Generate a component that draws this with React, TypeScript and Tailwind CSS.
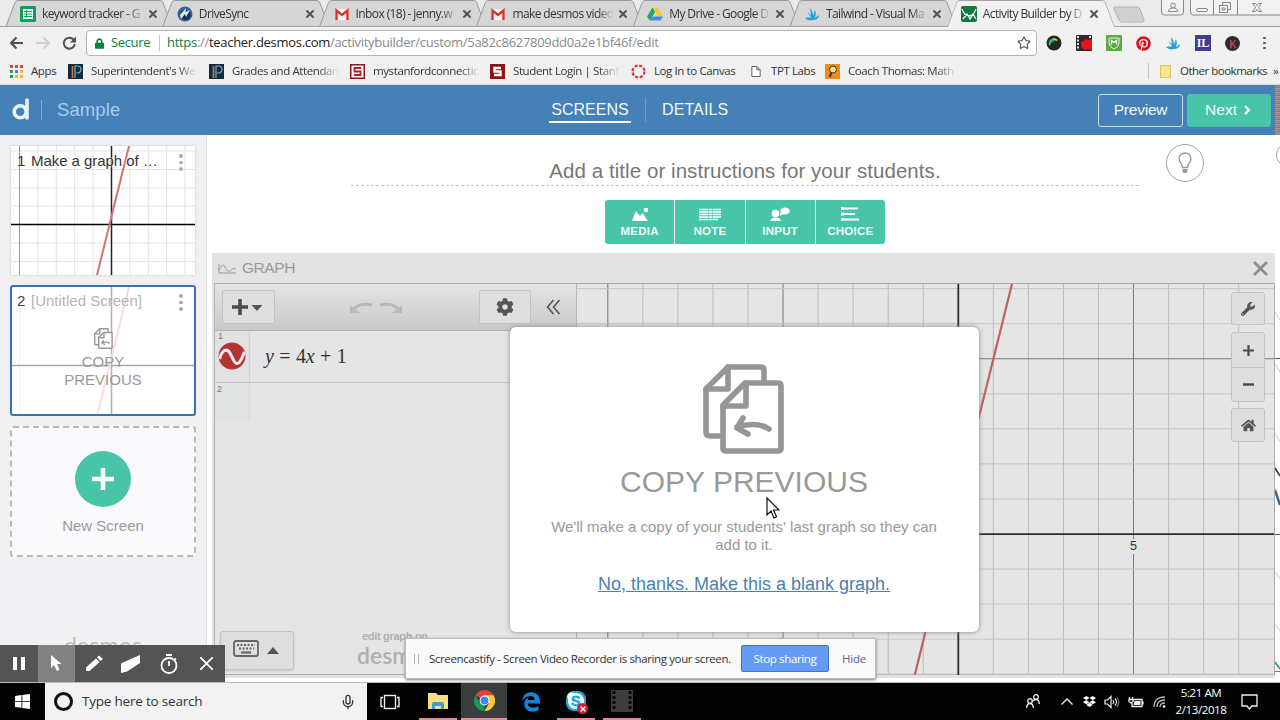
import type { ReactNode } from 'react';
import { Mic, Star, X } from 'lucide-react';
import { FaCog, FaDropbox, FaHome, FaLock, FaPinterest, FaSkype, FaWrench } from 'react-icons/fa';
import { FaEdgeLegacy } from 'react-icons/fa6';

const UI_FONT = 'font-["Open_Sans","Noto_Sans",sans-serif]';

function SheetsIcon() {
  return (
    <svg viewBox="0 0 16 16" className="w-4 h-4">
      <rect width="16" height="16" rx="1.5" fill="#0f9d58" />
      <path d="M3 3h10v10H3z" fill="#fff" />
      <path d="M4 5.5h8M4 8h8M4 10.5h8M6.5 4v8" stroke="#0f9d58" strokeWidth="1" />
    </svg>
  );
}

function DriveSyncIcon() {
  return (
    <svg viewBox="0 0 16 16" className="w-4 h-4">
      <circle cx="8" cy="8" r="7.5" fill="#2f6299" />
      <circle cx="8.5" cy="9" r="5" fill="#17324f" />
      <path d="M3 9 9 2l-.5 4L13 4l-4 7-1-3-4 5z" fill="#dbe8f5" />
    </svg>
  );
}

function GmailIcon() {
  return (
    <svg viewBox="0 0 16 16" className="w-4 h-4">
      <rect x="1" y="3" width="14" height="11" rx="1" fill="#f4f4f4" />
      <path d="M2.5 14V4.5L8 9l5.5-4.5V14" fill="none" stroke="#d5392d" strokeWidth="2.4" />
    </svg>
  );
}

function DriveIcon() {
  return (
    <svg viewBox="0 0 16 16" className="w-4 h-4">
      <path d="M5.5 1.5h5L16 10.5h-5z" fill="#fbc926" />
      <path d="M5.5 1.5 8 6 2.8 14.5 0 10.5z" fill="#22a463" />
      <path d="M5.4 10.5H16l-2.6 4H2.8z" fill="#4587f4" />
    </svg>
  );
}

function TailwindAppIcon() {
  return (
    <svg viewBox="0 0 16 16" className="w-4 h-4">
      <path d="M1 12c3-1 5 0 6-1L3 6l4 3-1-7c2 2 3 5 3 8l2-6c1 2 1 5 0 8l4-3c0 3-3 5-6 5-3 1-6 0-8-2z" fill="#25a3d8" />
    </svg>
  );
}

function DesmosIcon() {
  return (
    <svg viewBox="0 0 16 16" className="w-4 h-4">
      <rect width="16" height="16" rx="2" fill="#12783f" />
      <path d="M1 3c3 9 11 9 14 0M2 13l4-5 3 5 3-5 3 5" fill="none" stroke="#e2f5ea" strokeWidth="1.3" />
    </svg>
  );
}

const TABS: { title: string; icon: ReactNode; active?: boolean }[] = [
  { title: 'keyword tracker - G', icon: <SheetsIcon /> },
  { title: 'DriveSync', icon: <DriveSyncIcon /> },
  { title: 'Inbox (18) - jenny.w', icon: <GmailIcon /> },
  { title: 'make desmos video', icon: <GmailIcon /> },
  { title: 'My Drive - Google D', icon: <DriveIcon /> },
  { title: 'Tailwind - Visual Ma', icon: <TailwindAppIcon /> },
  { title: 'Activity Builder by D', icon: <DesmosIcon />, active: true },
];

function TabStrip() {
  return (
    <div className="relative h-[27px] bg-[#e9eaea]">
      <svg className="absolute inset-0" width="1280" height="27">
        {TABS.map((t, i) => {
          const x = 6 + i * 156.8;
          return (
            !t.active && (
              <path key={t.title} d={`M${x} 26.5 l9 -24 q1 -2 3 -2 h142 q2 0 3 2 l9 24`} fill="#d6d6d6" stroke="#9b9b9b" />
            )
          );
        })}
        <path d="M0 26.5H948l9-24q1-2 3-2h142q2 0 3 2l9 24h166" fill="none" stroke="#a3a3a3" />
        <path d="M948 27l9-24q1-2 3-2h142q2 0 3 2l9 24z" fill="#f1f1f1" />
        <path d="M1115 7h22q2 0 3 2l4 11q1 2-2 2h-20q-2 0-3-2l-5-11q-1-2 1-2z" fill="#d0d0d0" stroke="#b3b3b3" />
        {/* window controls */}
        <g fill="#f2f2f2" stroke="#888">
          <path d="M1161.5-1v13q0 3 3 3h16q3 0 3-3V-1z" />
          <path d="M1190.5-1v13q0 3 3 3H1282V-1z" />
          <path d="M1213.5 0v15M1237.5 0v15" />
          <circle cx="1173" cy="5.5" r="2.5" />
          <path d="M1168.5 11.5q0-3.5 4.5-3.5t4.5 3.5z" />
          <rect x="1196.5" y="8.5" width="11" height="3" rx="1.5" />
          <rect x="1222.5" y="2.5" width="8" height="7" />
          <rect x="1219.5" y="5.5" width="8" height="7" />
          <path d="M1222 8h3v2h-3z" />
          <path d="M1252.5 3.5h3l1.5 2 1.5-2h3l-3 4 3 4h-3l-1.5-2-1.5 2h-3l3-4z" />
        </g>
      </svg>
      <div className="relative flex pl-5 pt-1.5">
        {TABS.map(t => (
          <div key={t.title} className="flex w-[156.8px] shrink-0 items-center h-4">
            {t.icon}
            <span className="ml-1.5 w-[104px] whitespace-nowrap text-[12px] leading-4 tracking-[-0.6px] text-[#333] [mask-image:linear-gradient(to_right,black_82%,transparent_98%)]">
              {t.title}
            </span>
            <X className="ml-px w-3 h-3 text-[#555]" strokeWidth={4} />
          </div>
        ))}
      </div>
    </div>
  );
}

function AddressBar() {
  return (
    <div className="flex h-[31px] items-center bg-[#f1f1f1] pl-[9px] pt-px">
      <svg width="70" height="16" viewBox="0 0 70 16" fill="none" strokeWidth="2">
        <path d="M14 8H2M7.5 2.5 2 8l5.5 5.5" stroke="#505050" />
        <path d="M27 8h13M34.5 2.5 40 8l-5.5 5.5" stroke="#cfcfcf" />
        <path d="M64.5 4.5a5.5 5.5 0 1 0 1.3 4.5" stroke="#505050" />
        <path d="M67 1.5v6h-6z" fill="#505050" />
      </svg>
      <div className="ml-[7px] flex h-[26px] w-[951px] items-center rounded-sm border border-[#b5b5b5] bg-white pl-2 pr-[5px]">
        <FaLock className="w-[9px] h-[11px] text-[#0b8043]" />
        <span className="ml-[7px] w-[39px] text-[13px] tracking-[-0.35px] text-[#0b8043]">Secure</span>
        <span className="ml-[9px] h-4 w-px bg-[#c6c6c6]" />
        <span className="ml-[7px] text-[13px] tracking-[-0.3px] text-[#8a8a8a] whitespace-nowrap">
          <span className="text-[#0b8043]">https</span>://<span className="text-[#222]">teacher.desmos.com</span>
          /activitybuilder/custom/5a82c8627809dd0a2e1bf46f/edit
        </span>
        <Star className="ml-auto w-[14px] h-[14px] text-[#555]" />
      </div>
      <div className="ml-[9px] flex items-center gap-[14px]">
        <svg viewBox="0 0 16 16" className="w-4 h-4">
          <circle cx="8" cy="8" r="7.5" fill="#262626" />
          <path d="M4 10a4 4 0 0 1 3-5.5" stroke="#3ad04d" strokeWidth="2" fill="none" />
          <path d="M7 4.5a4 4 0 0 1 4 1" stroke="#f4c430" strokeWidth="2" fill="none" />
          <path d="M5 8a3 3 0 0 1 3-2" stroke="#2a7de0" strokeWidth="1.5" fill="none" />
        </svg>
        <svg viewBox="0 0 16 16" className="w-4 h-4">
          <rect width="16" height="16" rx="1" fill="#332727" />
          <path d="M2 1v14M14 1v3" stroke="#ddd" strokeWidth="2" strokeDasharray="2 1.5" />
          <path d="M5 7l3-1 1-2 3 1 4-1v11l-4-1-3 1-3-2z" fill="#e51515" />
        </svg>
        <svg viewBox="0 0 16 16" className="w-4 h-4">
          <rect width="16" height="16" rx="1" fill="#58aa41" />
          <path d="M3 3h10v5q0 4-5 6-5-2-5-6z" fill="none" stroke="#e9f7e3" />
          <path d="M5.5 9.5v-4l2.5 2 2.5-2v4" fill="none" stroke="#fff" strokeWidth="1.3" />
        </svg>
        <FaPinterest className="w-[15px] h-[15px] text-[#d01324]" />
        <TailwindAppIcon />
        <span className='flex h-4 w-4 items-center justify-center bg-[#423c8a] font-["Liberation_Serif",serif] text-[12px] font-bold leading-none text-white'>
          IL
        </span>
        <span className="flex h-[15px] w-[15px] items-center justify-center rounded-full bg-[#2c2a33] text-[11px] font-semibold leading-none text-[#d04a4f]">K</span>
        <span className="ml-[6px] flex flex-col gap-[2.5px] pl-[3px]">
          <i className="h-[2.5px] w-[2.5px] rounded-full bg-[#505050]" />
          <i className="h-[2.5px] w-[2.5px] rounded-full bg-[#505050]" />
          <i className="h-[2.5px] w-[2.5px] rounded-full bg-[#505050]" />
        </span>
      </div>
    </div>
  );
}

function PowerSchoolIcon() {
  return (
    <svg viewBox="0 0 15 15" className="w-[15px] h-[15px] shrink-0">
      <rect width="15" height="15" fill="#142b3f" />
      <path d="M4.5 2v12" stroke="#d87a3c" strokeWidth="1.5" />
      <path d="M7 14V2h2.5a3.5 3.5 0 0 1 0 7H8" fill="none" stroke="#69b8b5" strokeWidth="1.2" />
    </svg>
  );
}

function StanfordIcon({ solid }: { solid?: boolean }) {
  return (
    <svg viewBox="0 0 15 15" className="w-[15px] h-[15px] shrink-0">
      <rect x=".75" y=".75" width="13.5" height="13.5" fill={solid ? '#8c1515' : '#fff'} stroke="#8c1515" strokeWidth="1.5" />
      <path d="M11 4H4.5v3.5h6V11H4" fill="none" stroke={solid ? '#fff' : '#b01c2e'} strokeWidth={solid ? 2.4 : 1.8} />
    </svg>
  );
}

function Bookmark({ icon, label, className }: { icon: ReactNode; label: string; className: string }) {
  return (
    <div className={`flex shrink-0 items-center whitespace-nowrap ${className}`}>
      {icon}
      <span className="ml-2">{label}</span>
    </div>
  );
}

const FADE = '[mask-image:linear-gradient(to_right,black_84%,transparent_100%)]';

function BookmarksBar() {
  const dots = ['#d9483b', '#d9483b', '#d9483b', '#2f9e5b', '#3f7fe0', '#e9b92f', '#2f9e5b', '#e9b92f', '#e9b92f'];
  return (
    <div className="flex h-[27px] items-center border-b border-[#d8d8d8] bg-[#f0f0f0] pl-[10px] text-[11.5px] tracking-[-0.4px] text-[#333]">
      <Bookmark
        className="w-[58px]"
        label="Apps"
        icon={
          <span className="grid grid-cols-3 gap-[2px]">
            {dots.map((c, i) => (
              <i key={i} className="h-[3px] w-[3px]" style={{ backgroundColor: c }} />
            ))}
          </span>
        }
      />
      <Bookmark className={`w-[130px] mr-[11px] ${FADE}`} label="Superintendent's We" icon={<PowerSchoolIcon />} />
      <Bookmark className={`w-[130px] mr-[11px] ${FADE}`} label="Grades and Attendan" icon={<PowerSchoolIcon />} />
      <Bookmark className={`w-[130px] mr-[10px] ${FADE}`} label="mystanfordconnectic" icon={<StanfordIcon />} />
      <Bookmark className={`w-[130px] mr-[11px] ${FADE}`} label="Student Login | Stanf" icon={<StanfordIcon solid />} />
      <Bookmark
        className="w-[118px]"
        label="Log In to Canvas"
        icon={
          <svg viewBox="0 0 15 15" className="w-[15px] h-[15px]">
            <circle cx="7.5" cy="7.5" r="6" fill="none" stroke="#d8383a" strokeWidth="2.2" strokeDasharray="3.2 1.5" />
          </svg>
        }
      />
      <Bookmark
        className="w-[76px]"
        label="TPT Labs"
        icon={
          <svg viewBox="0 0 12 14" className="ml-[2px] mr-[2px] w-[10px] h-[13px]" fill="#fff" stroke="#666" strokeWidth="1.2">
            <path d="M1 1h6l4 4v8H1zM7 1v4h4" />
          </svg>
        }
      />
      <Bookmark
        className={`w-[132px] ${FADE}`}
        label="Coach Thomas: Math"
        icon={
          <svg viewBox="0 0 15 15" className="w-[15px] h-[15px] shrink-0">
            <rect width="15" height="15" fill="#ef8a1b" />
            <circle cx="8" cy="5.5" r="3.5" fill="#f8df72" stroke="#333" />
            <path d="M6 9 5 13" stroke="#333" strokeWidth="2" />
          </svg>
        }
      />
      <span className="ml-auto h-4 w-px bg-[#c4c4c4]" />
      <span className="ml-[11px] h-[13px] w-[11px] border border-[#e0c564] bg-[#fce68c]" />
      <span className="ml-[9px] w-[93px] whitespace-nowrap tracking-[-0.5px]">Other bookmarks</span>
      <span className="w-[7px]">»</span>
    </div>
  );
}

function AppHeader() {
  return (
    <header className="flex h-[50px] bg-[#4580b6] text-[#f2f9ff]">
      <div className="flex w-[549px] items-center">
        <svg className="ml-3 mb-[3px] w-[18px] h-[22px]" viewBox="0 0 18 22" fill="none" stroke="#e6f4ff" strokeWidth="3.6">
          <circle cx="8.2" cy="13.7" r="6" />
          <path d="M15 2v18" strokeLinecap="round" />
        </svg>
        <span className="ml-[11px] h-5 w-px bg-[#7fabd3]" />
        <span className="ml-[15px] text-[18.5px] tracking-[0.1px] text-[#a5cdf0]">Sample</span>
      </div>
      <nav className="flex items-center text-[16px]">
        <span className="mt-[3px] w-[82px] border-b-2 border-white pb-[1px] text-center leading-5">SCREENS</span>
        <span className="ml-[14px] h-6 w-px bg-[#6a9bc9]" />
        <span className="ml-4 leading-5 tracking-[0.1px]">DETAILS</span>
      </nav>
      <div className="ml-auto flex items-center gap-[4px] pr-[4px]">
        <button className="h-[33px] w-[85px] rounded-[3px] border border-[#c9e0f5] text-[15.5px] tracking-[-0.2px]">Preview</button>
        <button className="flex h-[33px] w-[84px] items-center justify-center gap-[7px] rounded-[3px] bg-[#48c4a9] pr-[2px] text-[15.5px]">
          Next
          <svg width="7" height="10" viewBox="0 0 7 10" fill="none" stroke="#fff" strokeWidth="2.2">
            <path d="M1 1l4 4-4 4" />
          </svg>
        </button>
      </div>
      <div className="w-[5px] bg-[repeating-linear-gradient(#b06f7a_0_1px,#7d9f78_1px_2px,#6f78b8_2px_3px,#b59a70_3px_4px)]" />
    </header>
  );
}

function CopyIcon({ className, stroke }: { className: string; stroke: number }) {
  return (
    <svg viewBox="0 0 82 90" className={className} fill="none" stroke="#969696" strokeWidth={stroke} strokeLinejoin="round" strokeLinecap="round">
      <path d="M61 18V6q0-3-3-3H25L3 25v43q0 4 4 4h11" strokeLinecap="butt" />
      <path d="M25 3v22H3" />
      <path d="M42 19 20 41v43q0 3 3 3h52q3 0 3-3V22q0-3-3-3z" fill="#fff" />
      <path d="M43 19v23H20" />
      <path d="M66 65q-12-8-32-2M40 54l-6 10 11 6" />
    </svg>
  );
}

function KebabDots() {
  return (
    <span className="flex flex-col gap-[3px]">
      <i className="h-[3.5px] w-[3.5px] rounded-full bg-[#aaa]" />
      <i className="h-[3.5px] w-[3.5px] rounded-full bg-[#aaa]" />
      <i className="h-[3.5px] w-[3.5px] rounded-full bg-[#aaa]" />
    </span>
  );
}

function ThumbGraph({ faded }: { faded?: boolean }) {
  const cols = Array.from({ length: 10 }, (_, i) => 8.5 + i * 18.4);
  const rows = [5, 23.5, 42, 60, 97, 115.5];
  return (
    <svg className={`absolute ${faded ? 'opacity-35 -left-px top-0' : 'left-0 top-0'}`} width="185" height="129">
      {!faded && cols.map(x => <path key={x} d={`M${x} 0V129`} stroke="#e2e2e0" />)}
      {!faded && rows.map(y => <path key={y} d={`M0 ${y}H185`} stroke="#e4e4e2" />)}
      <path d="M8.5 0V129" stroke={faded ? '#ddd' : '#999'} />
      <path d="M0 78.5H185" stroke="#000" strokeWidth="1.5" />
      <path d="M100.5 0V129" stroke="#222" strokeWidth="1.5" />
      <path d="M118 0 86 129" stroke={faded ? '#dc9fa6' : '#d37474'} strokeWidth="2" />
    </svg>
  );
}

function Sidebar() {
  return (
    <aside className="w-[207px] shrink-0 overflow-hidden border-r border-[#e2e2e4] bg-[#f0f0f2] px-[10px] pt-[11px] text-[15px]">
      <div className="relative mx-[1px] h-[129px] overflow-hidden bg-white shadow-[0_0_2px_#bbb]">
        <ThumbGraph />
        <div className="relative flex items-start pl-[6px] pt-[6px] leading-[18px] text-[#333]">
          <span className="w-[14px]">1</span>
          <span className="w-[140px] tracking-[-0.05px] [text-shadow:0_0_2px_#fff,0_0_2px_#fff]">Make a graph of …</span>
          <span className="mt-[2px] ml-2">
            <KebabDots />
          </span>
        </div>
      </div>
      <div className="relative mt-[10px] h-[131px] overflow-hidden rounded-[3px] border-2 border-[#3a71ac] bg-white">
        <ThumbGraph faded />
        <div className="relative flex items-start pl-[5px] pt-[5px] leading-[18px]">
          <span className="w-[14px] text-[#444]">2</span>
          <span className="w-[140px] text-[#b5b5b5]">[Untitled Screen]</span>
          <span className="mt-[2px] ml-2">
            <KebabDots />
          </span>
        </div>
        <div className="relative mt-[17px] flex flex-col items-center leading-[18px] text-[#999]">
          <CopyIcon className="mb-[4px] w-[19px] h-[21px]" stroke={6} />
          <span>COPY</span>
          <span>PREVIOUS</span>
        </div>
      </div>
      <div className="mt-[10px] flex h-[131px] flex-col items-center rounded-[3px] border-2 border-dashed border-[#b9b9b9] bg-[#fafafc] pt-[23px]">
        <div className="flex h-14 w-14 items-center justify-center rounded-full bg-[#48c4a9]">
          <svg width="24" height="24" viewBox="0 0 24 24" stroke="#fff" strokeWidth="4.5">
            <path d="M12 1v22M1 12h22" />
          </svg>
        </div>
        <span className="mt-[8px] text-[#999]">New Screen</span>
      </div>
      <div className="mt-[70px] text-center font-[Lato,sans-serif] text-[23.5px] leading-9 text-[#bdbdbd]">desmos</div>
    </aside>
  );
}

const INSERTS = [
  {
    label: 'MEDIA',
    icon: (
      <>
        <path d="M2 14 6 4l4 5 2.5-3L18 14z" fill="#fff" />
        <circle cx="16" cy="3" r="2.2" fill="#fff" />
      </>
    ),
  },
  { label: 'NOTE', icon: <path d="M-1 2.5h22M-1 5h22M-1 7.5h22M-1 10h22M-1 12.5h19" stroke="#fff" strokeWidth="1.3" strokeDasharray="9 .5 4 .5" /> },
  {
    label: 'INPUT',
    icon: (
      <>
        <circle cx="5.5" cy="6.5" r="3.8" fill="#fff" />
        <path d="M0 14q1-3.5 5.5-3.5T11 14z" fill="#fff" />
        <ellipse cx="15" cy="4" rx="4.7" ry="3.5" fill="#fff" />
        <path d="M11 5l-1.5 4 4-2z" fill="#fff" />
      </>
    ),
  },
  {
    label: 'CHOICE',
    icon: (
      <>
        <path d="M4 1.5h14M4 7h11M4 12.5h15" stroke="#fff" strokeWidth="1.8" />
        <path d="M1 1.5h3M1 7h3M1 12.5h3" stroke="#fff" strokeWidth="2.8" />
      </>
    ),
  },
];

function StepHeader() {
  return (
    <div className="flex h-[118px] shrink-0 justify-center bg-white">
      <div className="ml-[144px] flex w-[788px] flex-col items-center">
        <h1 className="w-full border-b border-dashed border-[#c4c4c4] pt-[22px] pb-px text-center text-[20.5px] leading-[27px] tracking-[0.06px] text-[#777]">
          Add a title or instructions for your students.
        </h1>
        <div className="mt-[14px] flex h-[44px] gap-px overflow-hidden rounded-[3px]">
          {INSERTS.map(b => (
            <button key={b.label} className="flex w-[69.25px] flex-col items-center bg-[#48c4a9] pt-[7px] text-[11.5px] font-bold leading-4 tracking-[0.25px] text-[#effffa]">
              <svg className="mb-px w-5 h-[15px] overflow-visible" viewBox="0 0 20 15">
                {b.icon}
              </svg>
              {b.label}
            </button>
          ))}
        </div>
      </div>
      <div className="ml-[27px] mt-[9px] mr-[72px] flex h-[38px] w-[38px] items-center justify-center rounded-full border border-[#a5a5a5]">
        <svg width="14" height="22" viewBox="0 0 14 22" fill="none" stroke="#999" strokeWidth="1.4">
          <path d="M4.5 15.5c0-4-3.5-5-3.5-8.500a6 6 0 0 1 12 0c0 3.500-3.500 4.500-3.500 8.500z" />
          <path d="M4.500 17h5v2l-1 2h-3l-1-2z" fill="#999" stroke="none" />
        </svg>
      </div>
      <div className="mt-[8px] h-6 w-[4px] overflow-hidden">
        <div className="h-6 w-6 rounded-full border border-[#a5a5a5]" />
      </div>
    </div>
  );
}

const TOOL_BTN = 'border border-[#c3c3c3] bg-[#dedede] flex items-center justify-center text-[#555]';

function ExpressionPanel() {
  return (
    <div className="flex w-[363px] shrink-0 flex-col border-l border-r border-[#b5b5b5] bg-[#e5e5e5]">
      <div className="flex h-[47px] shrink-0 items-center border-b border-[#b0b0b0] bg-linear-to-b from-[#e4e4e4] to-[#c9c9c9] pl-[7px]">
        <div className={`${TOOL_BTN} h-[34px] w-[53px] rounded-[2px] pr-[3px]`}>
          <svg width="32" height="18" viewBox="0 0 32 18">
            <path d="M9 1v16M1 9h16" stroke="#4c4c4c" strokeWidth="3.6" />
            <path d="M20.5 7h11L26 13z" fill="#555" />
          </svg>
        </div>
        <svg className="ml-[74px]" width="54" height="14" viewBox="0 0 54 14">
          <path d="M4 10Q10 2 23 5" fill="none" stroke="#b8b8b8" strokeWidth="3" />
          <path d="M1 5.5v7.5h10z" fill="#b8b8b8" />
          <path d="M31 5q13-3 19 5" fill="none" stroke="#b8b8b8" strokeWidth="3" />
          <path d="M53 5.5v7.5h-10z" fill="#b8b8b8" />
        </svg>
        <div className={`${TOOL_BTN} ml-[76px] h-[34px] w-[52px] rounded-[2px] pr-px`}>
          <FaCog className="w-[18px] h-[18px]" />
        </div>
        <svg className="ml-[15px]" width="15" height="16" viewBox="0 0 15 16" fill="none" stroke="#555" strokeWidth="1.6">
          <path d="M7.5 1 1.5 8l6 7M13.5 1l-6 7 6 7" />
        </svg>
      </div>
      <div className="flex h-[52px] shrink-0 border-b border-[#c5c5c5]">
        <div className="w-[35px] border-r border-[#d2d2d2] bg-[#e2e0e0] pl-[3px] text-[9px] leading-[11px] text-[#777]">
          1
          <svg width="28" height="28" viewBox="0 0 28 28">
            <circle cx="14" cy="14" r="13.5" fill="#b23434" />
            <path d="M1.5 17C4 8 9 5 12.5 12s5 11 8 9 4-7 6-11" fill="none" stroke="#f3e9e9" strokeWidth="3" />
          </svg>
        </div>
        <span className='pl-[15px] pt-[10px] font-["Liberation_Serif",serif] text-[20px] tracking-[-0.2px] [word-spacing:0.8px] text-[#333]'>
          <i>y</i> = 4<i>x</i> + 1
        </span>
      </div>
      <div className="h-[37px] w-[35px] border-r border-[#d8dada] bg-[#e0e2e2] pl-[2px] text-[9px] leading-[13px] text-[#777]">2</div>
      <div className="mt-auto flex items-end">
        <div className={`${TOOL_BTN} mb-[4px] ml-[5px] h-[39px] w-[74px] gap-[8px] rounded-[3px] pr-[2px] pb-[4px] shadow-sm`}>
          <svg width="26" height="17" viewBox="0 0 26 17" fill="none" stroke="#666" strokeWidth="1.8">
            <rect x="1" y="1" width="24" height="15" rx="2" />
            <path d="M4 5h18M6 8.5h15" strokeDasharray="2 1.5" />
            <path d="M8 12.5h10" strokeWidth="2.2" />
          </svg>
          <svg className="mt-[3px]" width="12" height="7" viewBox="0 0 12 7">
            <path d="M0 7 6 0l6 7z" fill="#555" />
          </svg>
        </div>
        <div className="ml-[63px] mb-[6px] w-[76px] whitespace-nowrap text-[#b0b0b0]">
          <div className="pl-[5px] text-[11px] font-bold leading-[12px] tracking-[-0.3px]">edit graph on</div>
          <div className="font-[Lato,sans-serif] text-[23px] font-semibold leading-[26px]">desmos</div>
        </div>
      </div>
    </div>
  );
}

function GraphPaper() {
  const cols = Array.from({ length: 19 }, (_, i) => i - 10);
  const rows = Array.from({ length: 12 }, (_, i) => i - 4);
  // origin is at (381, 250), one unit is 35px
  return (
    <svg className="absolute inset-0" width="697" height="391">
      {cols.map(i => (
        <path key={i} d={`M${381.3 + i * 35.05} 0V392`} stroke={i % 5 === 0 ? '#777' : '#bdbdbd'} strokeWidth={i === 0 ? 0 : 1} />
      ))}
      {rows.map(i => (
        <path key={i} d={`M0 ${250 - i * 35.05}H697`} stroke={i === 5 ? '#777' : '#c4c4c4'} strokeWidth={i === 0 ? 0 : 1} />
      ))}
      <path d="M381.3 0V392M0 250.1H697" stroke="#2c2c2c" strokeWidth="1.8" />
      <path d="M435 0 337.5 392" stroke="#c0605f" strokeWidth="2.2" />
      <rect x="550" y="255" width="13" height="15" fill="#e5e5e5" />
      <text x="556.5" y="266" textAnchor="middle" fontSize="12.5" fill="#333">
        5
      </text>
    </svg>
  );
}

function GraphView() {
  return (
    <div className="relative flex flex-1 justify-end bg-[#e5e5e5] border-r border-[#aaa]">
      <GraphPaper />
      <div className="relative mr-[9px] mt-[8px] flex w-[34px] flex-col">
        <div className={`${TOOL_BTN} h-[33px] rounded-[3px]`}>
          <FaWrench className="w-[14px] h-[14px]" />
        </div>
        <div className={`${TOOL_BTN} mt-[7px] h-[36px] rounded-t-[3px]`}>
          <svg width="11" height="11" stroke="#4c4c4c" strokeWidth="2.2">
            <path d="M5.5 0v11M0 5.5h11" />
          </svg>
        </div>
        <div className={`${TOOL_BTN} h-[34px] rounded-b-[3px] border-t-0`}>
          <svg width="11" height="3">
            <path d="M0 1.5h11" stroke="#4c4c4c" strokeWidth="2.5" />
          </svg>
        </div>
        <div className={`${TOOL_BTN} mt-[6px] h-[34px] rounded-[3px]`}>
          <FaHome className="w-[15px] h-[15px]" />
        </div>
      </div>
    </div>
  );
}

function CopyPreviousModal() {
  return (
    <div className="absolute left-[298px] top-[74px] flex h-[305px] w-[469px] flex-col items-center rounded-[6px] bg-white pt-[37px] pr-px shadow-[0_0_5px_#888]">
      <CopyIcon className="w-[82px] h-[90px]" stroke={5.6} />
      <h2 className="mt-[10px] text-[30px] leading-9 text-[#999]">COPY PREVIOUS</h2>
      <p className="mt-[18px] w-[410px] text-center text-[15px] leading-[18px] text-[#999]">
        We'll make a copy of your students' last graph so they can
        <br />
        add to it.
      </p>
      <a className="mt-[18px] text-[18px] leading-6 text-[#4b80b4] underline">No, thanks. Make this a blank graph.</a>
    </div>
  );
}

function GraphPanel() {
  return (
    <section className="relative ml-[5px] mr-[5px] flex h-[425px] flex-col bg-[#e2e2e2] pl-[2px]">
      <div className="flex h-[30px] shrink-0 items-center pl-[4px] text-[15.5px] text-[#999]">
        <svg width="19" height="11" viewBox="0 0 19 11" fill="none" stroke="#999">
          <path d="M1 1v9h17M1 7C3 3 5 0 7 4s3 5 5 4 3-4 6-2" />
        </svg>
        <span className="ml-[5px] tracking-[-0.45px]">GRAPH</span>
        <svg className="ml-auto mr-[7px]" width="15" height="15" viewBox="0 0 15 15" stroke="#8c8c8c" strokeWidth="2.8">
          <path d="M1 1l13 13M14 1 1 14" />
        </svg>
      </div>
      <div className="flex h-[392px] border-y border-[#aaa]">
        <ExpressionPanel />
        <GraphView />
      </div>
      <CopyPreviousModal />
    </section>
  );
}

function RecorderToolbar() {
  return (
    <div className="absolute left-0 top-[645px] flex h-[37px] w-[225px] bg-[#545454] text-white">
      <div className="flex flex-1 items-center justify-center">
        <svg width="12" height="13"><path d="M0 0h4v13H0zM8 0h4v13H8z" fill="#fff" /></svg>
      </div>
      <div className="flex flex-1 items-center justify-center bg-[#828282]">
        <svg width="12" height="17" viewBox="0 0 12 17"><path d="M1 0v13l3-3 3 6 2.5-1.2L7 9h4.5z" fill="#fff" /></svg>
      </div>
      <div className="flex flex-1 items-center justify-center">
        <svg width="18" height="17" viewBox="0 0 18 17" fill="#fff"><path d="M1 12.5 11 3.5l3.5 3.5-10 9H1zM12 2.5l2-2 4 3.5-2.5 2z" /></svg>
      </div>
      <div className="flex flex-1 items-center justify-center">
        <svg width="20" height="18" viewBox="0 0 20 18" fill="#fff"><path d="M0 9.5Q0 8 2 7.5L19 0v8L6 16.5 0 18z" /></svg>
      </div>
      <div className="flex flex-1 items-center justify-center">
        <svg width="18" height="20" viewBox="0 0 18 20" fill="none" stroke="#fff" strokeWidth="1.8">
          <circle cx="9" cy="11.5" r="7.5" />
          <path d="M6 1h6M9 7v5M14.5 4.5l1.5 1.5" />
        </svg>
      </div>
      <div className="flex flex-1 items-center justify-center">
        <svg width="13" height="13" stroke="#fff" strokeWidth="1.8"><path d="M0 0l13 13M13 0 0 13" /></svg>
      </div>
    </div>
  );
}

function SharingBar() {
  return (
    <div className={`absolute left-[405px] top-[638px] flex h-[41px] w-[471px] items-center whitespace-nowrap rounded-[2px] border border-[#bbb] bg-[#fafafb] shadow-[0_1px_3px_#777] text-[11.5px] ${UI_FONT}`}>
      <span className="ml-[8px] h-[10px] w-[5px] border-x border-[#b5b5b5]" />
      <span className="ml-[10px] w-[312px] tracking-[-0.38px] text-[#333]">Screencastify - Screen Video Recorder is sharing your screen.</span>
      <button className="h-[27px] w-[88px] rounded-[2px] border border-[#4275c8] bg-[#659bf5] text-white tracking-[-0.35px]">Stop sharing</button>
      <a className="ml-[13px] tracking-[-0.2px] text-[#53649c]">Hide</a>
    </div>
  );
}

function Taskbar() {
  return (
    <footer className={`flex h-[37px] bg-[#020404] text-white ${UI_FONT}`}>
      <div className="flex w-[45px] items-center justify-center">
        <svg width="15" height="15" viewBox="0 0 15 15" fill="#fff">
          <path d="M0 2 6.5 1v6H0zM7.3.9 15 0v7H7.3zM0 7.8h6.5v6L0 13zM7.3 7.8H15V15l-7.7-1z" />
        </svg>
      </div>
      <div className="flex w-[322px] items-center bg-[#f2f2f2] text-[#333]">
        <span className="ml-[9px] h-[19px] w-[19px] rounded-full border-[3px] border-[#111]" />
        <span className="ml-[9px] text-[13.5px] tracking-[-0.2px]">Type here to search</span>
        <Mic className="ml-auto mr-[11px] w-4 h-4" strokeWidth={2} />
      </div>
      <div className="flex">
        <div className="flex w-[46px] items-center justify-center">
          <svg width="20" height="16" viewBox="0 0 20 16" fill="none" stroke="#eee" strokeWidth="1.4">
            <rect x="4.5" y="1.5" width="11" height="13" />
            <path d="M3 3.5H1v9h2M17 3.5h2v9h-2" />
          </svg>
        </div>
        <div className="mx-[6px] flex w-[38px] items-center justify-center border-b-2 border-[#e98a96]">
          <svg width="20" height="18" viewBox="0 0 20 18">
            <path d="M0 1h8l2 2h10v14H0z" fill="#f6df83" />
            <path d="M4 17v-5q0-2 2-2h8q2 0 2 2v5h-3v-3H7v3z" fill="#3ba0d0" />
          </svg>
        </div>
        <div className="ml-[-2px] flex w-[46px] items-center justify-center border-b-2 border-[#e98a96] bg-[#3a3d3d]">
          <svg width="21" height="21" viewBox="0 0 24 24">
            <path d="M12 12 1.6 6A12 12 0 0 1 22.4 6z" fill="#db4437" />
            <path d="M12 12 12 24A12 12 0 0 1 1.6 6L7 15z" fill="#0f9d58" />
            <path d="M12 6h10.4A12 12 0 0 1 12 24l5.2-9z" fill="#fc3" />
            <circle cx="12" cy="12" r="5.6" fill="#fff" />
            <circle cx="12" cy="12" r="4.5" fill="#4285f4" />
          </svg>
        </div>
        <div className="flex w-[48px] items-center justify-center">
          <FaEdgeLegacy className="w-5 h-5 text-[#1583d7]" />
        </div>
        <div className="relative ml-[2px] flex w-[38px] items-center justify-center border-b-2 border-[#e98a96]">
          <FaSkype className="w-[20px] h-[20px] rounded-lg bg-[#1ea8e0] text-white" />
          <span className="absolute left-[20px] top-[20px] flex h-[11px] w-[11px] items-center justify-center rounded-full bg-[#d3203b]">
            <X className="w-2 h-2" strokeWidth={4} />
          </span>
        </div>
        <div className="ml-[8px] flex w-[38px] items-center justify-center border-b-2 border-[#e98a96]">
          <svg width="22" height="22" viewBox="0 0 22 22">
            <rect width="22" height="22" fill="#3d3d40" />
            <path d="M3 1v20M19 1v20" stroke="#0a0a0a" strokeWidth="3" strokeDasharray="3 2" />
          </svg>
        </div>
      </div>
      <div className="ml-auto flex items-center">
        <svg width="14" height="15" viewBox="0 0 14 15" className="mr-[-3px] ml-[3px] shrink-0" fill="none" stroke="#eee" strokeWidth="1.3">
          <circle cx="4" cy="7" r="2.3" />
          <path d="M.7 14q0-4.5 3.3-4.5T7.3 14" />
          <circle cx="10" cy="3" r="2.3" />
          <path d="M7 7q1-1.5 3-1.5 3.3 0 3.3 4.5" />
        </svg>
        <svg className="ml-[24px]" width="12" height="7" fill="none" stroke="#eee" strokeWidth="1.3"><path d="M.5 6.5 6 1l5.5 5.5" /></svg>
        <FaDropbox className="ml-[10px] w-[13px] h-[13px]" />
        <svg className="ml-[8px]" width="16" height="14" viewBox="0 0 16 14" fill="none" stroke="#eee" strokeWidth="1.2">
          <path d="M1 5h2.5L7 1.5v11L3.5 9H1zM9 5q1.5 2 0 4M11 3.5q3 3.5 0 7" />
          <path d="M13 2q3.5 5 0 10" stroke="#777" />
        </svg>
        <svg className="ml-[8px]" width="16" height="12" viewBox="0 0 15 12" fill="none" stroke="#eee" strokeWidth="1.3">
          <path d="M5 3.5h8.5v7h-10V7M14.5 5.5v3M1 1v2M4 1v2M.5 3.5h4v2l-2 1.5-2-1.5z" />
          <path d="M6 5h6v4H5z" fill="#eee" stroke="none" />
        </svg>
        <svg className="ml-[9px]" width="13" height="12" viewBox="0 0 13 12" fill="none" stroke="#bbb" strokeWidth="1.3">
          <path d="M1 11Q1 1 12 1M4 11q0-7 8-7M7 11q0-4 5-4" />
          <circle cx="11" cy="10.5" r="1.3" fill="#fff" stroke="none" />
        </svg>
        <div className="ml-[9px] w-[52px] pb-px text-center whitespace-nowrap text-[11.5px] leading-[17px] tracking-[-0.4px]">
          5:21 AM
          <br />
          2/13/2018
        </div>
        <svg className="ml-[14px] mr-[22px]" width="17" height="16" viewBox="0 0 17 16" fill="none" stroke="#eee" strokeWidth="1.3">
          <path d="M1 1h15v11h-5l-2.5 3L6 12H1z" />
        </svg>
      </div>
    </footer>
  );
}

export default function App() {
  return (
    <div className='relative flex h-[720px] w-[1280px] flex-col overflow-hidden bg-white font-["Liberation_Sans",Arial,sans-serif]'>
      <div className={UI_FONT}>
        <TabStrip />
        <AddressBar />
        <BookmarksBar />
      </div>
      <AppHeader />
      <div className="flex h-[547px] shrink-0">
        <Sidebar />
        <main className="flex min-w-0 flex-1 flex-col">
          <StepHeader />
          <GraphPanel />
        </main>
      </div>
      <div className="h-px shrink-0 bg-[#bbb]" />
      <Taskbar />
      {/* sliver of the window behind, right edge */}
      <svg className="absolute left-[1275px] top-[284px]" width="5" height="394" fill="none">
        <path d="M0 28l5 8M0 80l5 8M0 150l5 7M0 288l5 7M0 340l5 7" stroke="#ccc" />
        <path d="M0 74.5h5M0 250.5h5" stroke="#555" />
        <path d="M0 184l5 8" stroke="#333" strokeWidth="1.5" />
        <path d="M0 206l5 15" stroke="#3d6a86" strokeWidth="2.5" />
        <path d="M0 378l5 7" stroke="#4a9b9b" strokeWidth="2" />
        <path d="M0 387.5h5" stroke="#c0555a" />
      </svg>
      <RecorderToolbar />
      <SharingBar />
      <svg className="absolute left-[766px] top-[497px]" width="14" height="22" viewBox="0 0 14 22">
        <path d="M1 1v17l4-4 3 7 2.5-1.2L7.5 13H13z" fill="#fff" stroke="#111" strokeWidth="1.2" />
      </svg>
    </div>
  );
}
